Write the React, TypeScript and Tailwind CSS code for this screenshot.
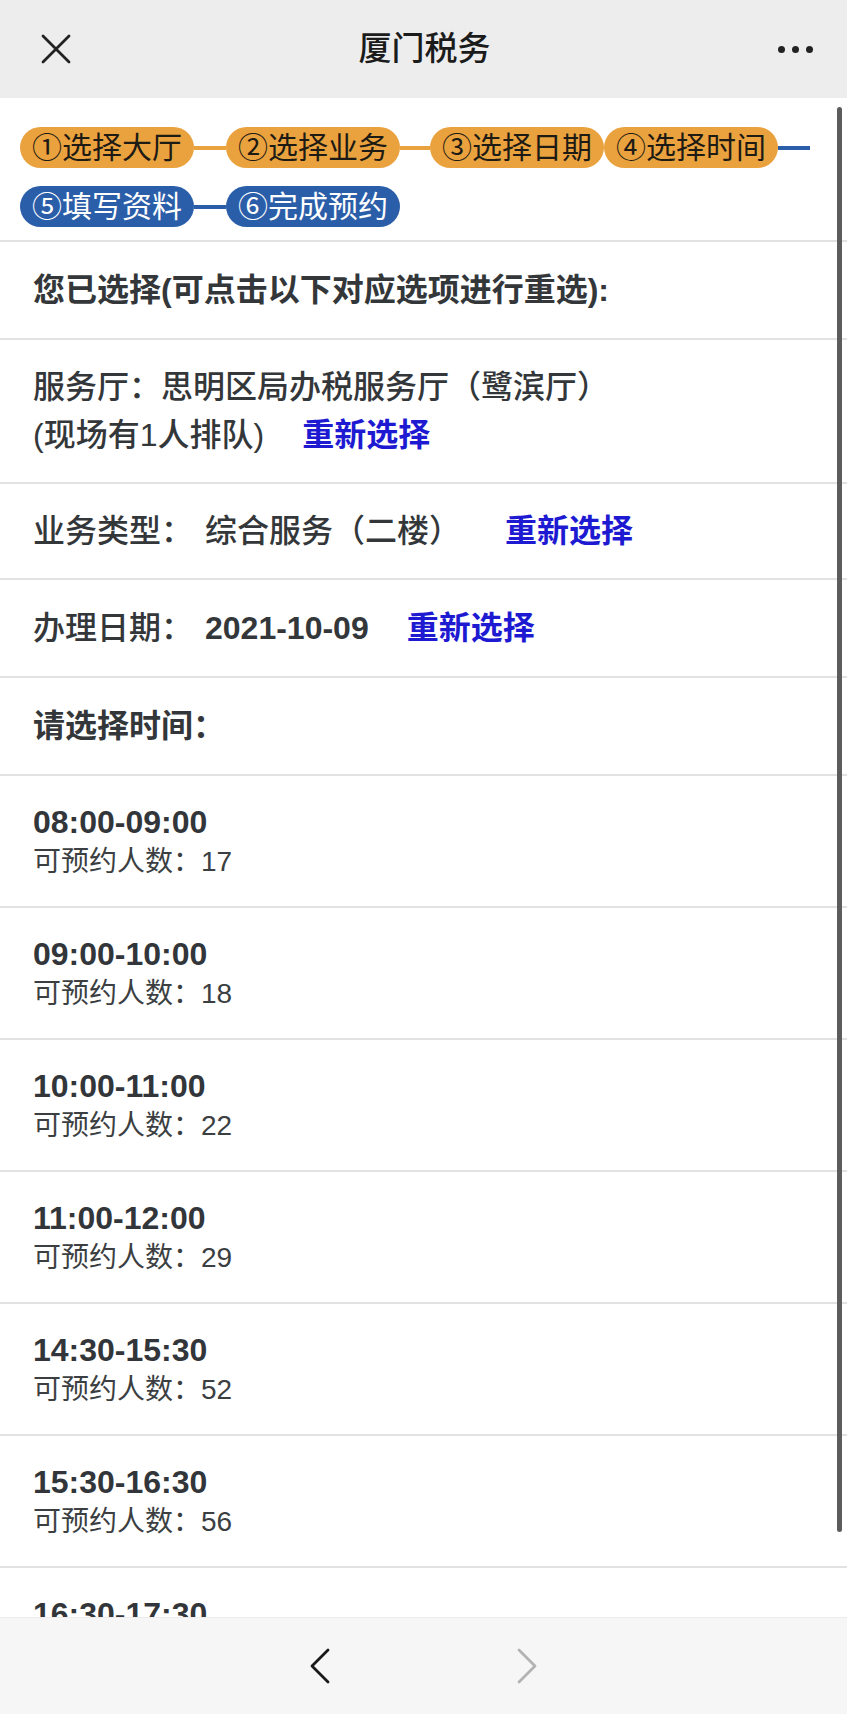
const slots = [
  { time: '08:00-09:00', count: 17 },
  { time: '09:00-10:00', count: 18 },
  { time: '10:00-11:00', count: 22 },
  { time: '11:00-12:00', count: 29 },
  { time: '14:30-15:30', count: 52 },
  { time: '15:30-16:30', count: 56 },
  { time: '16:30-17:30', count: 60 },
];

const font = "font-['Liberation_Sans','Noto_Sans_CJK_SC',sans-serif]";

function Pill({ label, done }: { label: string; done: boolean }) {
  return (
    <div
      className={`flex h-[41px] w-[174px] shrink-0 items-center justify-center rounded-full text-[30px] leading-none ${
        done ? 'bg-[#eaa23e] text-[#1e1a14]' : 'bg-[#2b5ea9] text-white'
      }`}
    >
      {label}
    </div>
  );
}

function Line({ w, done }: { w: string; done: boolean }) {
  return <div className={`h-[4px] shrink-0 ${w} ${done ? 'bg-[#eaa23e]' : 'bg-[#2b5ea9]'}`} />;
}

function Relink({ ml }: { ml: string }) {
  return <span className={`${ml} font-bold text-[#1d1ad2]`}>重新选择</span>;
}

export default function App() {
  return (
    <div className={`flex h-[1714px] w-[847px] flex-col overflow-hidden bg-white ${font}`}>
      {/* top bar */}
      <div className="flex h-[98px] shrink-0 items-center justify-between bg-[#ededed] pl-[41px] pr-[34px]">
        <svg width="30" height="30" viewBox="0 0 30 30" className="text-[#222]">
          <path d="M2 2 28 28M28 2 2 28" stroke="currentColor" strokeWidth="2.8" strokeLinecap="round" />
        </svg>
        <div className="text-[33px] font-medium text-[#1b1b1b]">厦门税务</div>
        <div className="flex gap-[7px]">
          <span className="h-[7px] w-[7px] rounded-full bg-[#222]" />
          <span className="h-[7px] w-[7px] rounded-full bg-[#222]" />
          <span className="h-[7px] w-[7px] rounded-full bg-[#222]" />
        </div>
      </div>

      <div className="relative flex-1 overflow-hidden">
        {/* steps */}
        <div className="flex flex-col gap-[18px] border-b-2 border-[#e2e2e2] pb-[13px] pl-[20px] pt-[29px]">
          <div className="flex items-center">
            <Pill label="①选择大厅" done />
            <Line w="w-[32px]" done />
            <Pill label="②选择业务" done />
            <Line w="w-[30px]" done />
            <Pill label="③选择日期" done />
            <Pill label="④选择时间" done />
            <Line w="w-[32px]" done={false} />
          </div>
          <div className="flex items-center">
            <Pill label="⑤填写资料" done={false} />
            <Line w="w-[32px]" done={false} />
            <Pill label="⑥完成预约" done={false} />
          </div>
        </div>

        <div className="text-[32px] font-medium leading-[48px] text-[#34373a]">
          <div className="border-b-2 border-[#e2e2e2] px-[33px] py-6 font-bold">
            您已选择(可点击以下对应选项进行重选):
          </div>
          <div className="border-b-2 border-[#e2e2e2] px-[33px] py-[23px]">
            <div>服务厅：思明区局办税服务厅（鹭滨厅）</div>
            <div>
              (现场有1人排队)
              <Relink ml="ml-[38px]" />
            </div>
          </div>
          <div className="border-b-2 border-[#e2e2e2] px-[33px] py-[23px]">
            业务类型：<span className="ml-[12px]">综合服务（二楼）</span>
            <Relink ml="ml-[44px]" />
          </div>
          <div className="border-b-2 border-[#e2e2e2] px-[33px] py-6">
            办理日期：<span className="ml-[12px] font-bold">2021-10-09</span>
            <Relink ml="ml-[38px]" />
          </div>
          <div className="border-b-2 border-[#e2e2e2] px-[33px] py-6 font-bold">请选择时间：</div>
        </div>

        {slots.map((s) => (
          <div key={s.time} className="border-b-2 border-[#e2e2e2] px-[33px] pb-[25px] pt-[25px]">
            <div className="text-[32px] font-bold leading-[42px] text-[#32363a]">{s.time}</div>
            <div className="text-[28px] leading-[38px] text-[#3c3f42]">可预约人数：{s.count}</div>
          </div>
        ))}

        {/* scroll indicator */}
        <div className="absolute right-[5px] top-[9px] h-[1425px] w-[5px] rounded-full bg-[#5c5c5c]" />
      </div>

      {/* bottom nav */}
      <div className="flex h-[97px] shrink-0 items-center justify-center gap-[187px] border-t border-[#ececec] bg-[#f6f6f6]">
        <svg width="20" height="36" viewBox="0 0 20 36" className="text-[#1a1a1a]">
          <path d="M18 2 2 18 18 34" fill="none" stroke="currentColor" strokeWidth="2.8" strokeLinecap="round" strokeLinejoin="round" />
        </svg>
        <svg width="20" height="36" viewBox="0 0 20 36" className="text-[#b3b3b3]">
          <path d="M2 2 18 18 2 34" fill="none" stroke="currentColor" strokeWidth="2.8" strokeLinecap="round" strokeLinejoin="round" />
        </svg>
      </div>
    </div>
  );
}
